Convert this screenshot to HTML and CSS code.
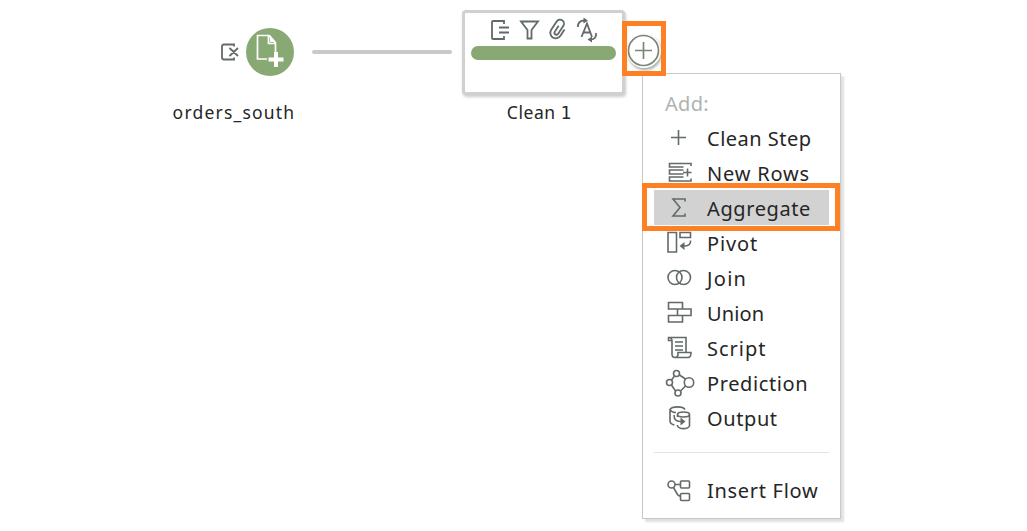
FILE: index.html
```html
<!DOCTYPE html>
<html lang="en">
<head>
<meta charset="utf-8">
<title>Flow</title>
<link rel="stylesheet" href="styles.css">
</head>
<body>
<main class="canvas">
  <section class="node node-input">
    <div class="input-icons">
      <svg class="icon remove-icon" viewBox="0 0 20 20"><path d="M14 4.500V2.500H4Q2 2.500 2 4.500V15.500Q2 17.500 4 17.500H14V15.500M9.500 6L18 14M18 6L9.500 14"/></svg>
      <svg class="source-icon" viewBox="0 0 48 48"><circle cx="24" cy="24" r="24" fill="#88a973"/><path d="M21 31H11.500V7.500H23L29.500 15V24M22.500 8V15.500H29.500" fill="none" stroke="#fff" stroke-width="1.700"/><path d="M24 7L30 14H24Z" fill="#fff"/><path d="M30 24V39M22.500 31.500H37.500" stroke="#fff" stroke-width="4"/></svg>
    </div>
    <span class="node-label orders-label">orders_south</span>
  </section>
  <div class="connector"></div>
  <section class="node node-clean">
    <div class="clean-card">
      <div class="clean-icons">
        <svg class="icon tool" viewBox="0 0 24 24"><path d="M16 6V3H5Q4 3 4 4V20Q4 21 5 21H16V18M11 9.500H21M11 14.500H21"/></svg>
        <svg class="icon tool" viewBox="0 0 24 24"><path d="M4 3.500H21L14.500 12V20.500H10.500V12Z"/></svg>
        <svg class="icon tool" viewBox="0 0 24 24"><path transform="rotate(33 12 11.500)" d="M17.500 8V15.500a5.500 5.500 0 0 1 -11 0V5.500a4 4 0 0 1 8 0V15a2 2 0 0 1 -4 0V8"/></svg>
        <svg class="icon tool" viewBox="0 0 24 24"><path d="M6.500 19L12 5.500L17 19M8.500 14.500H15.500M3 9C2.500 5 5 2.500 9.500 2.500M21 15C21.500 19 19.500 21.500 16 21.500"/><path class="solid" d="M8.500 -.500L13 2.500L8.500 5.500ZM17 18.500L12.500 21.500L17 24.500Z"/></svg>
      </div>
      <div class="clean-bar"></div>
    </div>
    <span class="node-label clean-label">Clean <span class="footed-digit">1</span></span>
  </section>

  <nav class="menu">
    <div class="menu-title">Add:</div>
    <div class="item"><svg class="icon menu-icon" viewBox="0 0 32 35"><path d="M14.500 10V25M7 17.500H22"/></svg><span class="clean-step-text">Clean Step</span></div>
    <div class="item"><svg class="icon menu-icon" viewBox="0 0 32 35"><path d="M27 11V8.500H5.500V12H19.500M19.500 15H5.500V19H19.500M19.500 22H5.500V26H27V23.500M23.500 13.500V21.500M19 17.500H27.500"/></svg><span class="rows-text">New Rows</span></div>
    <div class="item selected"><svg class="icon menu-icon" viewBox="0 0 32 35"><path d="M21 11.500V9H9L16 17.500L9 26H21V23.500"/></svg><span>Aggregate</span></div>
    <div class="item"><svg class="icon menu-icon" viewBox="0 0 32 35"><path d="M4 7.500H12.500V27H4ZM16 7.500H26.500V12.500H16ZM26.500 15.500C27 19 25 21 19 21"/><path class="solid" d="M20.500 17L15.500 21L20.500 25Z"/></svg><span class="pivot-text">Pivot</span></div>
    <div class="item"><svg class="icon menu-icon" viewBox="0 0 32 35"><circle cx="11" cy="17.500" r="7"/><circle cx="19.500" cy="17.500" r="7"/></svg><span class="join-text">Join</span></div>
    <div class="item"><svg class="icon menu-icon" viewBox="0 0 32 35"><path d="M4.500 7.500H18.500V14H4.500ZM13.500 14H27V20.500H13.500ZM4.500 20.500H18.500V27H4.500Z"/></svg><span class="union-text">Union</span></div>
    <div class="item"><svg class="icon menu-icon" viewBox="0 0 32 35"><path d="M7.500 10.500H4.500V7.500H22V22M5.500 7.500Q8 8 8 11V24Q8 27.500 11 27.500H24Q27 27.500 27 22.500H14Q14.500 27.500 11 27.500M11 12H19M11 16H19M11 20H19"/></svg><span class="script-text">Script</span></div>
    <div class="item"><svg class="icon menu-icon" viewBox="0 0 32 35"><circle cx="12.500" cy="8.500" r="3"/><circle cx="5.500" cy="17.500" r="3"/><circle cx="25" cy="17.500" r="4.700"/><circle cx="14" cy="28" r="3"/><path d="M10.500 11L7.500 15M15.500 10L21.500 14M7.500 20L11.500 26M16.500 26L21.500 21"/></svg><span>Prediction</span></div>
    <div class="item"><svg class="icon menu-icon" viewBox="0 0 32 35"><path d="M21 9.500C19 6 8 6 6 9.500V21C6 23.500 8 24.500 10.500 25M6 10Q8 12.500 12 12.500"/><ellipse cx="19.500" cy="14.500" rx="6" ry="2.500"/><path d="M13.500 14.500V17M25.500 14.500V26C24 29.500 15 29.500 13.500 26V25M10 15C10 20 12 21.500 19 21.500"/><path class="solid" d="M16.500 17.500L21.500 21.500L16.500 25.500Z"/></svg><span>Output</span></div>
    <div class="divider"></div>
    <div class="item"><svg class="icon menu-icon" viewBox="0 0 32 35"><circle cx="7.500" cy="12.500" r="3.500"/><rect x="16.500" y="9" width="9" height="7" rx="1"/><rect x="16.500" y="21.500" width="9" height="7" rx="1"/><path d="M11 12.500H16.500M9.500 15.500L13.500 22.500Q14.500 24 16.500 24"/></svg><span class="insert-text">Insert Flow</span></div>
  </nav>

  <div class="add-button"><svg class="icon plus-icon" viewBox="0 0 34 34"><circle cx="16.500" cy="16.500" r="15"/><path d="M16.500 8V25M8 16.500H25"/></svg></div>
  <div class="callout callout-plus"></div>
  <div class="callout callout-item"></div>
</main>
</body>
</html>
```
FILE: styles.css
```css
* { box-sizing: border-box; }
body { margin: 0; background: #fff; font-family: "Noto Sans", sans-serif; color: #262626; }
.canvas { position: relative; width: 1027px; height: 531px; overflow: hidden; }
.icon { fill: none; stroke: #626a6a; stroke-width: 1.6; display: block; flex: none; }
.icon .solid { fill: #626a6a; stroke: none; }
.node { position: absolute; display: flex; flex-direction: column; align-items: center; }
.node-label { font-size: 17.5px; line-height: 24px; white-space: nowrap; }
.node-input { left: 164px; top: 28px; width: 140px; }
.input-icons { display: flex; align-items: center; gap: 6px; width: 140px; padding-left: 56px; }
.remove-icon { width: 20px; height: 20px; stroke-width: 1.8; }
.source-icon { width: 48px; height: 48px; display: block; flex: none; }
.orders-label { margin-top: 24px; letter-spacing: 1.2px; }
.connector { position: absolute; left: 312px; top: 50px; width: 140px; height: 4px; border-radius: 2px; background: #c9c9c9; }
.node-clean { left: 462px; top: 10px; width: 163px; }
.clean-card { width: 163px; height: 85px; border: 3px solid #d0d0d0; border-radius: 4px; background: #fff; box-shadow: 1px 2px 3px rgba(0, 0, 0, .2); padding: 5px 6px; }
.clean-icons { display: flex; gap: 5px; padding-left: 17px; }
.tool { width: 24px; height: 24px; stroke-width: 1.8; overflow: visible; }
.clean-bar { margin-top: 4px; height: 14px; width: 145px; border-radius: 7px; background: #88a973; }
.clean-label { margin-top: 5px; letter-spacing: .55px; padding-right: 8px; }
.footed-digit { font-family: "DejaVu Sans", sans-serif; font-size: 17px; line-height: 1; }
.menu { position: absolute; left: 642px; top: 73px; width: 199px; height: 446px; padding: 11px 11px 0; background: #fff; border: 1px solid #c8c8c8; box-shadow: 3px 3px 2px rgba(0, 0, 0, .12); }
.menu-title { height: 35px; padding-left: 11px; font-size: 20px; line-height: 37px; letter-spacing: .3px; color: #aeb3b2; }
.item { display: flex; width: 175px; height: 35px; padding-left: 10px; gap: 11px; font-size: 20px; line-height: 37px; letter-spacing: .6px; white-space: nowrap; }
.menu-icon { width: 32px; height: 35px; }
.clean-step-text { letter-spacing: .5px; }
.rows-text { letter-spacing: .8px; }
.pivot-text { letter-spacing: .9px; }
.join-text { letter-spacing: 1.3px; }
.union-text { letter-spacing: .1px; }
.script-text { letter-spacing: 1px; }
.insert-text { letter-spacing: .7px; }
.selected { background: #d2d2d2; }
.divider { height: 1px; margin: 17px 0 19px; width: 175px; background: #e2e2e2; }
.add-button { position: absolute; left: 627px; top: 34px; width: 34px; height: 34px; border-radius: 50%; background: #fff; box-shadow: 1px 2px 3px rgba(0, 0, 0, .35); }
.plus-icon { width: 34px; height: 34px; stroke: #798875; stroke-width: 1.7; }
.callout { position: absolute; border: 5px solid #fd8024; }
.callout-plus { left: 622px; top: 21px; width: 44px; height: 55px; }
.callout-item { left: 642px; top: 183px; width: 198px; height: 48px; }
```
